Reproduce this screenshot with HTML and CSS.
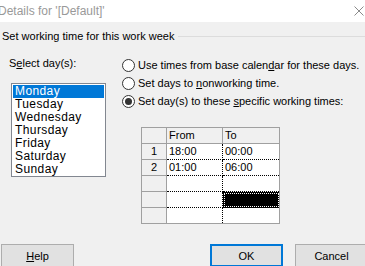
FILE: index.html
```html
<!DOCTYPE html>
<html lang="en">
<head>
    <meta charset="UTF-8">
    <meta name="viewport" content="width=device-width, initial-scale=1.0">
    <title>Details for '[Default]'</title>
    <link rel="stylesheet" href="styles.css">
</head>
<body>

<div class="titlebar">
    <span class="title">Details for '[Default]'</span>
    <svg class="close" width="10" height="10" viewBox="0 0 10 10">
        <path d="M0.5 0.5 L9.5 9.5 M9.5 0.5 L0.5 9.5" stroke="#8a8a8a" stroke-width="1" fill="none"/>
    </svg>
</div>

<div class="dialog">
    <div class="group-head">
        <span>Set working time for this work week</span>
        <div class="group-line"></div>
    </div>

    <div class="main">
        <div class="days">
            <div class="label">S<u>e</u>lect day(s):</div>
            <ul class="listbox">
                <li class="selected">Monday</li>
                <li>Tuesday</li>
                <li>Wednesday</li>
                <li>Thursday</li>
                <li>Friday</li>
                <li>Saturday</li>
                <li>Sunday</li>
            </ul>
        </div>

        <div class="options">
            <div class="radio"><span class="dot"></span><span>Use times from base calen<u>d</u>ar for these days.</span></div>
            <div class="radio"><span class="dot"></span><span>Set days to <u>n</u>onworking time.</span></div>
            <div class="radio"><span class="dot checked"></span><span>Set day(s) to these <u>s</u>pecific working times:</span></div>

            <table class="times">
                <tr>
                    <th class="rowhead"></th>
                    <th class="col-from">From</th>
                    <th class="col-to">To</th>
                </tr>
                <tr>
                    <td class="rowhead">1</td>
                    <td>18:00</td>
                    <td>00:00</td>
                </tr>
                <tr>
                    <td class="rowhead">2</td>
                    <td>01:00</td>
                    <td>06:00</td>
                </tr>
                <tr>
                    <td class="rowhead"></td>
                    <td></td>
                    <td></td>
                </tr>
                <tr>
                    <td class="rowhead"></td>
                    <td></td>
                    <td class="active"></td>
                </tr>
                <tr>
                    <td class="rowhead"></td>
                    <td></td>
                    <td></td>
                </tr>
            </table>
        </div>
    </div>

    <div class="buttons">
        <button class="btn"><u>H</u>elp</button>
        <div class="spacer"></div>
        <button class="btn default">OK</button>
        <button class="btn">Cancel</button>
    </div>
</div>

</body>
</html>
```
FILE: styles.css
```css
body {
    margin: 0;
    width: 365px;
    height: 266px;
    overflow: hidden;
    background-color: #f0f0f0;
    font-family: "Liberation Sans", Arial, sans-serif;
    font-size: 11px;
    color: #000;
}
u {
    text-decoration-thickness: 1px;
    text-underline-offset: 1px;
}
.titlebar {
    height: 22px;
    background-color: #fff;
    display: flex;
    align-items: center;
    justify-content: space-between;
    font-size: 12px;
}
.title {
    color: #999;
    margin-left: -2px;
}
.close {
    margin-right: 1px;
}
.dialog {
    padding-left: 2px;
}
.group-head {
    display: flex;
    align-items: center;
    height: 16px;
    margin-top: 6px;
}
.group-line {
    flex: 1;
    border-top: 1px solid #dcdcdc;
    margin-left: 4px;
}
.main {
    display: flex;
    margin-top: 12px;
}
.days {
    width: 113px;
    padding-left: 7px;
    flex-shrink: 0;
}
.label {
    height: 14px;
    line-height: 14px;
}
.listbox {
    list-style: none;
    margin: 13px 0 0 2px;
    padding: 1px;
    width: 91px;
    height: 90px;
    background-color: #fff;
    border: 1px solid #828790;
    box-sizing: content-box;
    font-size: 12px;
    letter-spacing: 0.4px;
}
.listbox li {
    height: 13px;
    line-height: 13px;
    padding-left: 2px;
}
.listbox li.selected {
    background-color: #0078d7;
    color: #fff;
}
.radio {
    display: flex;
    align-items: center;
    height: 18px;
    white-space: nowrap;
}
.dot {
    width: 11px;
    height: 11px;
    border: 1px solid #333;
    border-radius: 50%;
    background-color: #fff;
    margin-right: 3px;
    display: flex;
    align-items: center;
    justify-content: center;
    flex-shrink: 0;
}
.dot.checked::after {
    content: "";
    width: 7px;
    height: 7px;
    border-radius: 50%;
    background-color: #333;
}
.times {
    border-collapse: collapse;
    margin: 17px 0 0 19px;
    background-color: #fff;
    border: 1px solid #a0a0a0;
    color: #000;
}
.times th, .times td {
    height: 16px;
    padding: 0 0 0 2px;
    text-align: left;
    font-weight: normal;
    line-height: 15px;
    box-sizing: border-box;
}
.times th {
    background-color: #f0f0f0;
    border: 1px solid #a0a0a0;
}
.times td {
    border: 1px dotted #000;
}
.times td.rowhead {
    background-color: #f0f0f0;
    border: 1px solid #a0a0a0;
    text-align: center;
    padding: 0;
}
.times .rowhead {
    width: 25px;
}
.times .col-from {
    width: 56px;
}
.times .col-to {
    width: 57px;
}
.times td:last-child {
    border-right: 1px solid #a0a0a0;
}
.times tr:last-child td {
    border-bottom: 1px solid #a0a0a0;
}
.times td.active {
    background-color: #000;
    outline: 1px dotted #fff;
    outline-offset: -2px;
}
.buttons {
    display: flex;
    margin-top: 20px;
    margin-left: -1px;
}
.spacer {
    flex: 1;
}
.btn {
    width: 73px;
    height: 23px;
    background-color: #e1e1e1;
    border: 1px solid #adadad;
    font-family: inherit;
    font-size: 11px;
    color: #000;
    padding: 0;
    flex-shrink: 0;
}
.btn.default {
    border: 2px solid #0078d7;
    margin-right: 12px;
}
.btn:last-child {
    margin-right: -3px;
}
```
